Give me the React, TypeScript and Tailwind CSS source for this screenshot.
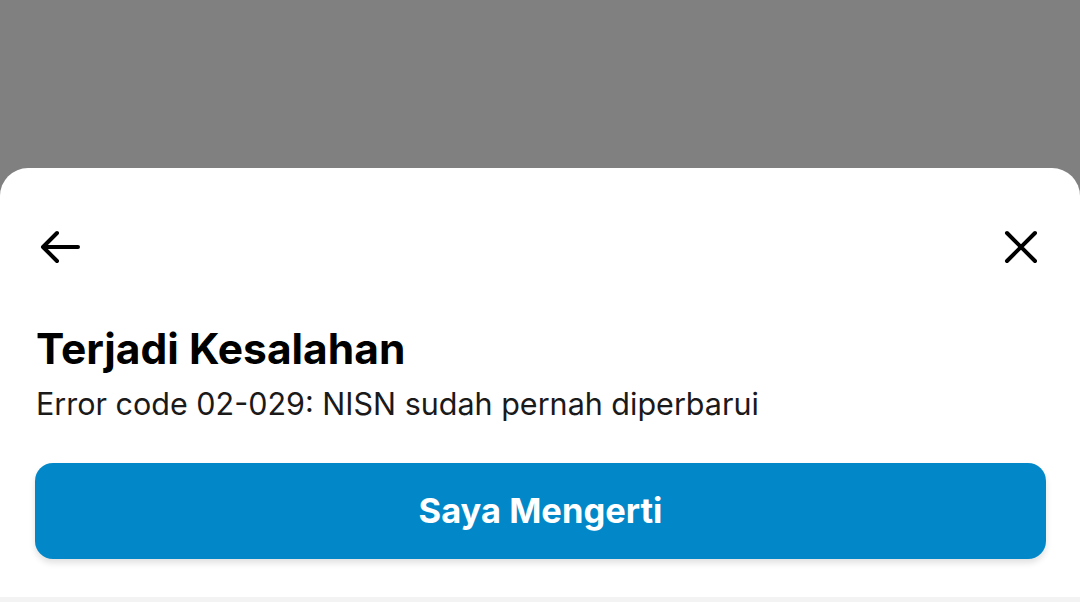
import React from "react";

export default function App() {
  return (
    <div className="w-[1080px] h-[602px] bg-[#808080] flex flex-col overflow-hidden" style={{ fontFamily: "Inter, 'Noto Sans', sans-serif" }}>
      <div className="h-[168px] shrink-0" />
      <div className="flex-1 bg-white rounded-t-[28px] flex flex-col">
        <div className="flex items-center justify-between pl-[40px] pr-[42px] pt-[62px]">
          <svg width="42" height="34" viewBox="0 0 42 34" fill="none" stroke="#000" strokeWidth="4" strokeLinecap="round" strokeLinejoin="round">
            <path d="M38 17H4M17 3L3 17L17 31" />
          </svg>
          <svg width="34" height="34" viewBox="0 0 34 34" fill="none" stroke="#000" strokeWidth="4" strokeLinecap="round">
            <path d="M3 3L31 31M31 3L3 31" />
          </svg>
        </div>
        <div className="px-[36px] pt-[59px]">
          <h1 className="text-[42.5px] leading-[52px] font-bold text-black">Terjadi Kesalahan</h1>
          <p className="mt-[10px] text-[30.5px] leading-[38px] text-[#1a1a1a]">Error code 02-029: NISN sudah pernah diperbarui</p>
        </div>
        <div className="px-[35px] pt-[40px]">
          <button className="w-[1011px] h-[96px] rounded-[18px] bg-[#0288c9] text-white text-[34.5px] font-bold shadow-[0_4px_6px_rgba(0,0,0,0.12)] flex items-center justify-center">
            Saya Mengerti
          </button>
        </div>
        <div className="flex-1" />
        <div className="h-[5px] bg-[#f3f3f3]" />
      </div>
    </div>
  );
}
